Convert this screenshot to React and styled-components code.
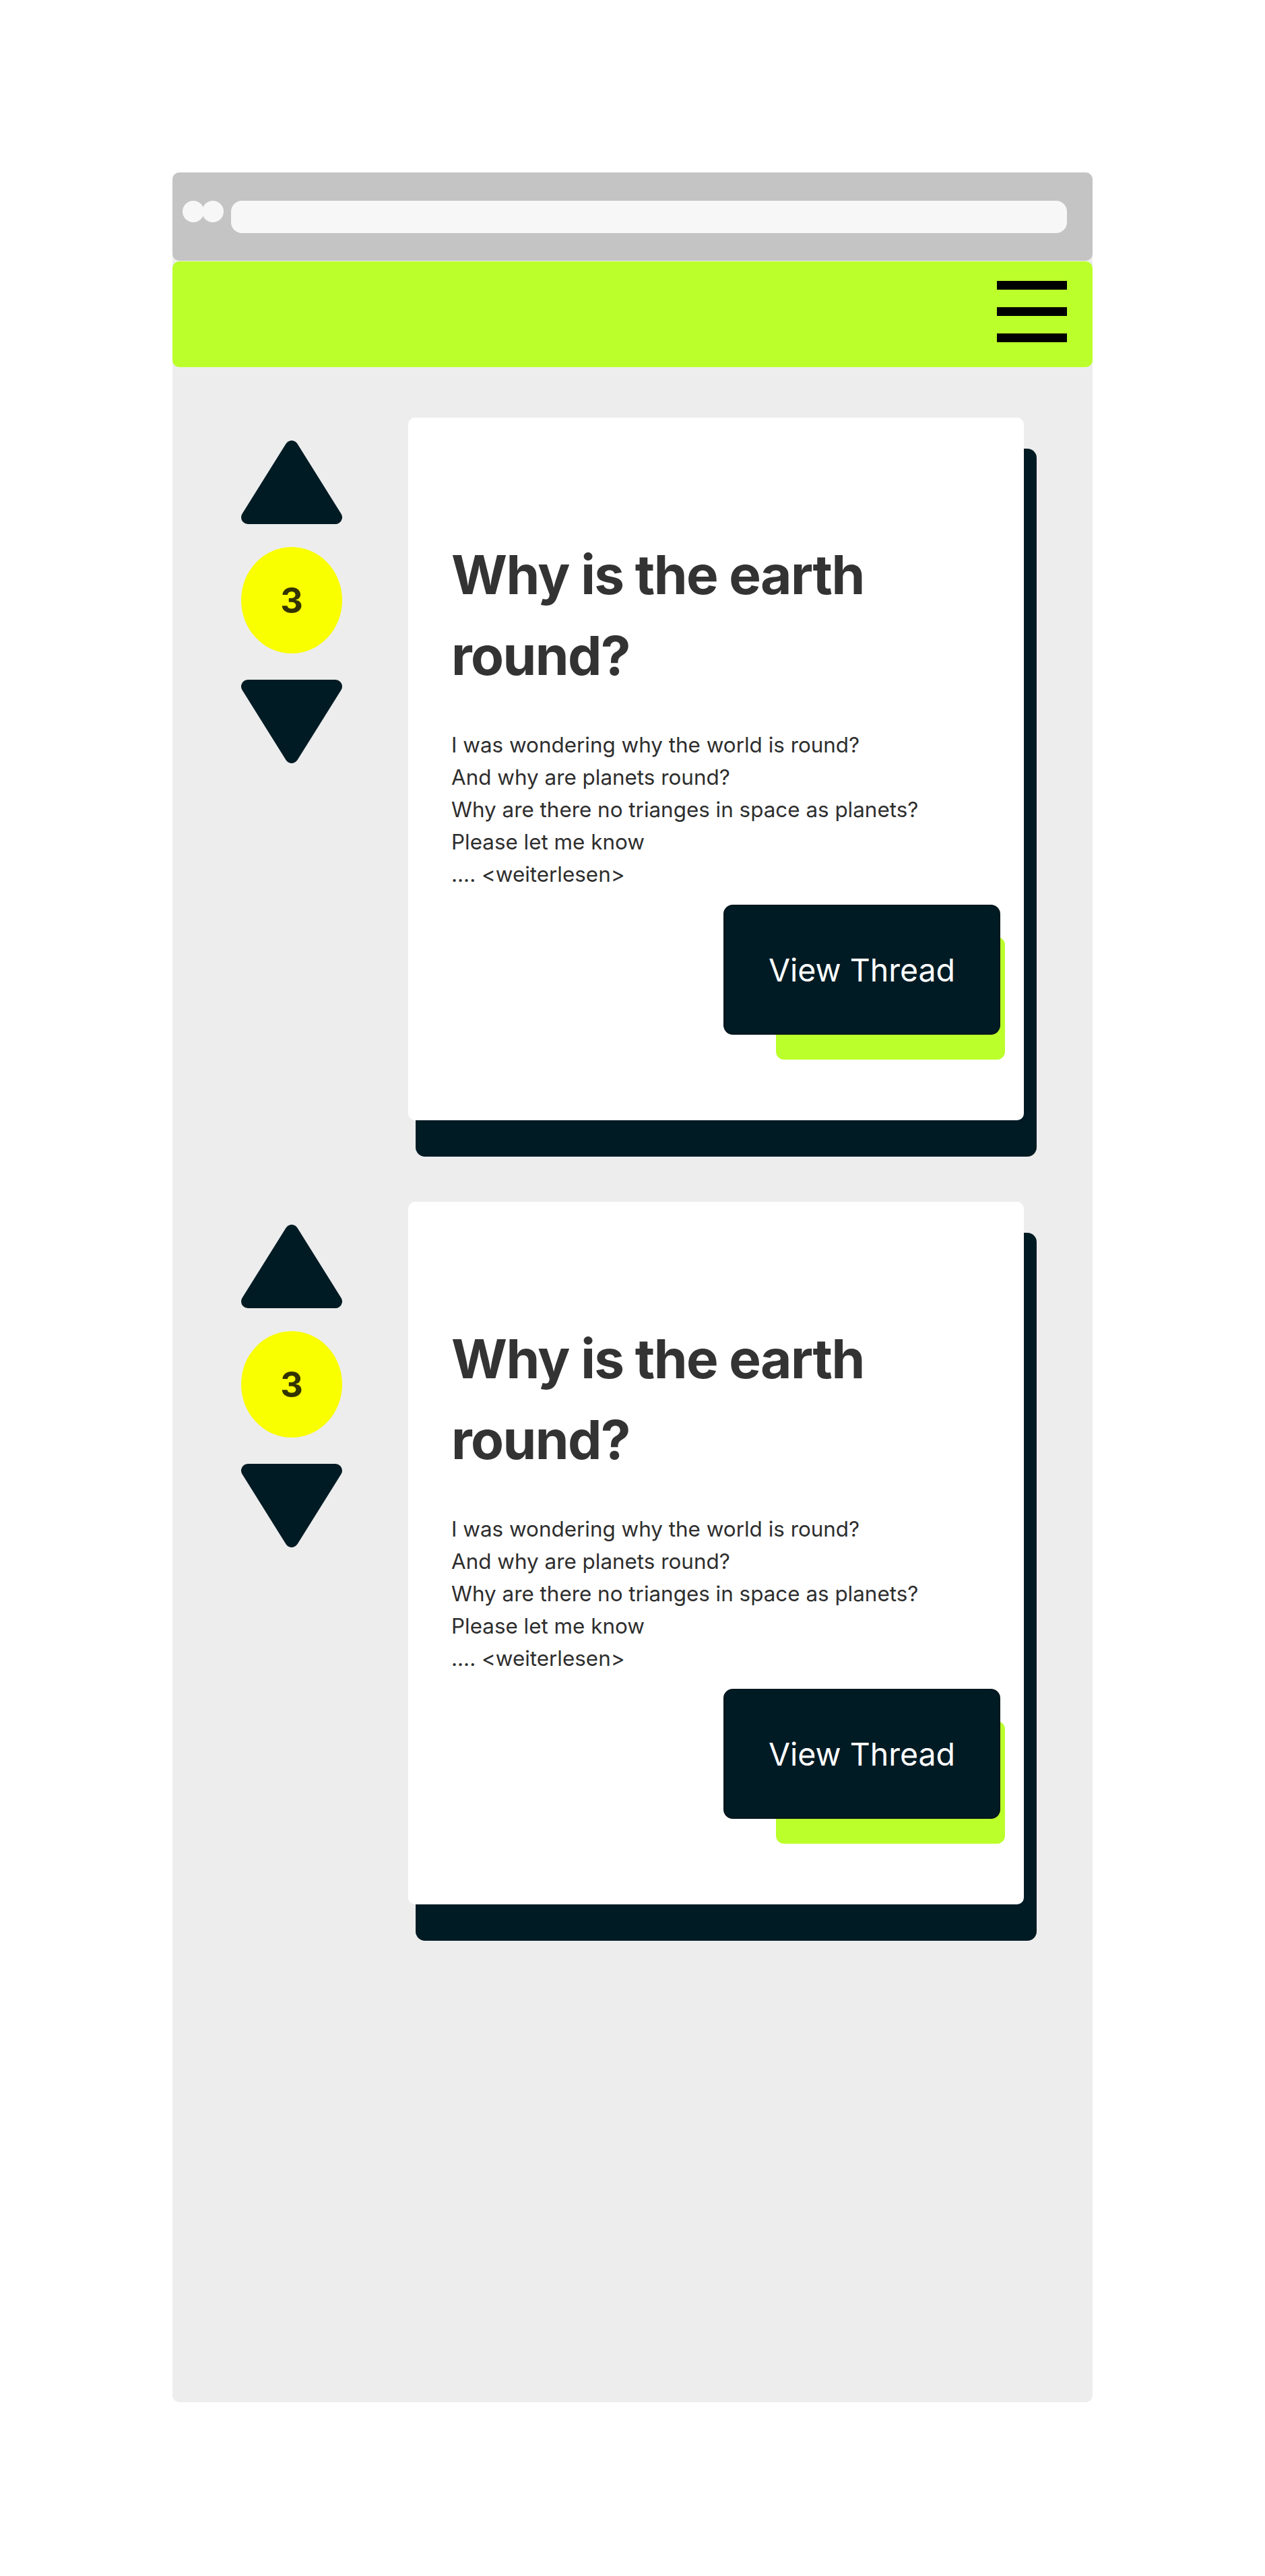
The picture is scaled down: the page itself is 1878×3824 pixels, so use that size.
import React from 'react'
import styled, { createGlobalStyle } from 'styled-components'

const GlobalStyle = createGlobalStyle`
    * {
        box-sizing: border-box;
    }
    body {
        margin: 0;
        background: #ffffff;
        font-family: 'Inter', 'Noto Sans', sans-serif;
    }
`

const Page = styled.div`
    width: 1878px;
    height: 3824px;
    padding-top: 256px;
    display: flex;
    justify-content: center;
`
const Frame = styled.div`
    width: 1366px;
    height: 3310px;
    background: #ededed;
    border-radius: 10px;
    display: flex;
    flex-direction: column;
`
const BrowserBar = styled.div`
    height: 131px;
    background: #c4c4c4;
    border-radius: 10px;
    display: flex;
    align-items: flex-start;
    padding: 42px 38px 0 15px;
`
const Dot = styled.span`
    width: 32px;
    height: 32px;
    border-radius: 50%;
    background: #f7f7f7;
    & + & {
        margin-left: -3px;
    }
`
const UrlBar = styled.div`
    flex: 1;
    height: 48px;
    margin-left: 11px;
    background: #f7f7f7;
    border-radius: 16px;
`
const NavBar = styled.div`
    height: 157px;
    margin-top: 1px;
    background: #bbff2b;
    border-radius: 10px;
    display: flex;
    justify-content: flex-end;
    padding: 29px 38px 0 0;
`
const Burger = styled.div`
    width: 104px;
    display: flex;
    flex-direction: column;
    gap: 26px;
    span {
        height: 13px;
        background: #000000;
    }
`
const Feed = styled.div`
    display: flex;
    flex-direction: column;
    gap: 121px;
    padding: 75px 0 0 102px;
`
const Post = styled.div`
    display: flex;
    align-items: flex-start;
`
const Votes = styled.div`
    width: 150px;
    margin-right: 98px;
    padding-top: 34px;
    display: flex;
    flex-direction: column;
    align-items: center;
`
const Arrow = styled.svg`
    display: block;
    width: 150px;
    height: 124px;
    transform: ${props => props.$down ? 'rotate(180deg)' : 'none'};
`
const Score = styled.div`
    width: 150px;
    height: 158px;
    margin: 34px 0 39px;
    border-radius: 50%;
    background: #faff00;
    display: flex;
    align-items: center;
    justify-content: center;
    font-size: 52px;
    font-weight: 700;
    color: #333300;
`
const Card = styled.div`
    width: 914px;
    height: 1043px;
    background: #ffffff;
    border-radius: 10px;
    box-shadow: 15px 50px 0 4px #011b24;
    padding: 173px 35px 0 64px;
`
const Title = styled.h2`
    margin: 0;
    max-width: 780px;
    font-size: 80px;
    line-height: 120px;
    font-weight: 700;
    letter-spacing: -1.6px;
    color: #333333;
`
const Body = styled.p`
    margin: 49px 0 0;
    font-size: 31.4px;
    line-height: 48px;
    color: #2e2e2e;
`
const Actions = styled.div`
    display: flex;
    justify-content: flex-end;
    margin-top: 21px;
`
const ButtonWrap = styled.div`
    position: relative;
    &::before {
        content: '';
        position: absolute;
        left: 78px;
        top: 48px;
        right: -7px;
        bottom: -37px;
        background: #bbff2b;
        border-radius: 12px;
    }
`
const ThreadButton = styled.button`
    position: relative;
    width: 411px;
    height: 193px;
    border: 2px solid #00161d;
    border-radius: 14px;
    background: #011b24;
    color: #ffffff;
    font-family: 'Inter', 'Noto Sans', sans-serif;
    font-size: 46.5px;
    font-weight: 400;
    cursor: pointer;
`

function Triangle({ down }) {
  return (
    <Arrow viewBox="0 0 150 124" $down={down}>
      <polygon
        points="75,10 140,114 10,114"
        fill="#011b24"
        stroke="#011b24"
        strokeWidth="20"
        strokeLinejoin="round"
      />
    </Arrow>
  )
}

const lines = [
  'I was wondering why the world is round?',
  'And why are planets round?',
  'Why are there no trianges in space as planets?',
  'Please let me know',
  '.... <weiterlesen>',
]

function Thread({ score }) {
  return (
    <Post>
      <Votes>
        <Triangle />
        <Score>{score}</Score>
        <Triangle down />
      </Votes>
      <Card>
        <Title>Why is the earth round?</Title>
        <Body>
          {lines.map((line, i) => (
            <React.Fragment key={i}>
              {line}
              {i < lines.length - 1 && <br />}
            </React.Fragment>
          ))}
        </Body>
        <Actions>
          <ButtonWrap>
            <ThreadButton>View Thread</ThreadButton>
          </ButtonWrap>
        </Actions>
      </Card>
    </Post>
  )
}

export default function App() {
  return (
    <Page>
      <GlobalStyle />
      <Frame>
        <BrowserBar>
          <Dot />
          <Dot />
          <UrlBar />
        </BrowserBar>
        <NavBar>
          <Burger>
            <span />
            <span />
            <span />
          </Burger>
        </NavBar>
        <Feed>
          <Thread score={3} />
          <Thread score={3} />
        </Feed>
      </Frame>
    </Page>
  )
}
